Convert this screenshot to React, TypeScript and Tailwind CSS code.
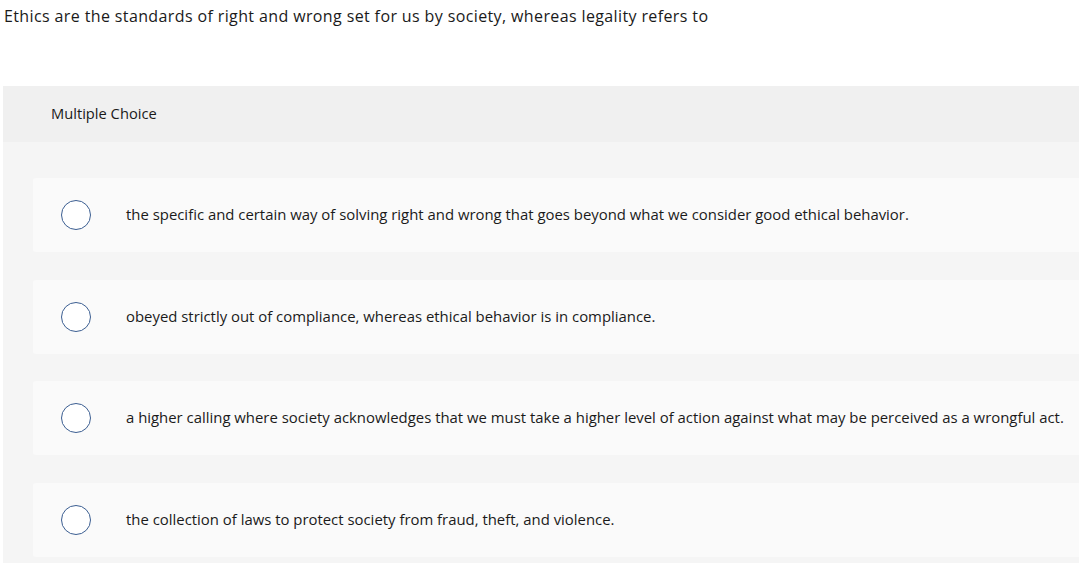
import React from 'react';

const options = [
  'the specific and certain way of solving right and wrong that goes beyond what we consider good ethical behavior.',
  'obeyed strictly out of compliance, whereas ethical behavior is in compliance.',
  'a higher calling where society acknowledges that we must take a higher level of action against what may be perceived as a wrongful act.',
  'the collection of laws to protect society from fraud, theft, and violence.',
];

export default function App() {
  return (
    <div className="min-h-screen bg-white text-[#1a1a1a]" style={{ fontFamily: '"Open Sans", sans-serif' }}>
      <p className="px-[4px] pt-[5px] text-[16px] leading-[22px] tracking-[0.38px]">
        Ethics are the standards of right and wrong set for us by society, whereas legality refers to
      </p>

      <div className="ml-[3px] mt-[59px] bg-[#f5f5f5] pb-[6px]">
        <div className="flex h-[56px] items-center bg-[#f0f0f0] pb-[1px] pl-[48px] text-[14.7px]">Multiple Choice</div>

        <div className="flex flex-col gap-[27.5px] pl-[30px] pt-[36px]">
          {options.map((o) => (
            <div key={o} className="flex h-[74px] items-center rounded-l-[3px] bg-[#fafafa]">
              <span className="ml-[28px] h-[30px] w-[30px] shrink-0 rounded-full border-[1.5px] border-[#3b5e91] bg-white" />
              <span className="ml-[35px] pb-[2px] text-[14.9px] leading-[20px]">{o}</span>
            </div>
          ))}
        </div>
      </div>
    </div>
  );
}
